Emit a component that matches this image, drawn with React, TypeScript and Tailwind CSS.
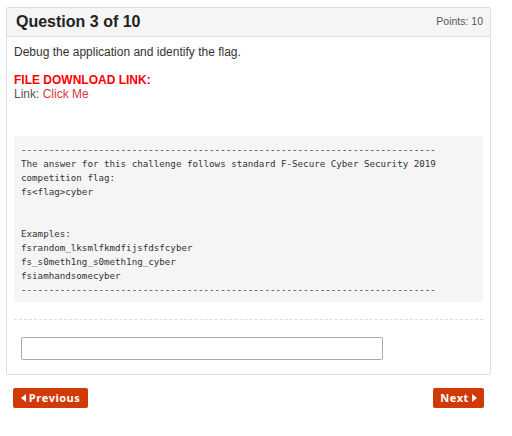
const preText = `---------------------------------------------------------------------------
The answer for this challenge follows standard F-Secure Cyber Security 2019
competition flag:
fs<flag>cyber


Examples:
fsrandom_lksmlfkmdfijsfdsfcyber
fs_s0meth1ng_s0meth1ng_cyber
fsiamhandsomecyber
---------------------------------------------------------------------------`;

const App = () => {
  return (
    <div className="min-h-[436px] w-[512px] bg-white font-['Liberation_Sans',Arial,sans-serif] text-[#333]">
      <div className="ml-[6px] w-[485px] pt-[7px]">
        <div className="rounded-[2px] border border-[#dddddd] bg-white">
          <div className="flex h-[29px] items-center justify-between border-b border-[#dddddd] bg-[#f5f5f5] pl-[9px] pr-[7px]">
            <h1 className="text-[16px] font-bold leading-none text-[#222]">Question 3 of 10</h1>
            <span className="text-[10.5px] text-[#555]">Points: 10</span>
          </div>
          <div className="px-[7px] pt-[8px]">
            <p className="text-[12px] leading-[14px]">Debug the application and identify the flag.</p>
            <p className="mt-[14px] text-[12px] font-bold leading-[14px] text-[#ff0000]">FILE DOWNLOAD LINK:</p>
            <p className="text-[12px] leading-[14px] text-[#555]">
              Link: <span className="text-[#d9363e]">Click Me</span>
            </p>
            <pre className="mt-[35px] w-[469px] rounded-[2px] bg-[#f5f5f5] pb-[5px] pl-[7px] pt-[7px] font-['DejaVu_Sans_Mono',monospace] text-[9.2px] leading-[14px] text-[#333]">
              {preText}
            </pre>
            <div className="mt-[17px] border-t border-dashed border-[#dddddd]" />
            <div className="pb-[14px] pl-[7px] pt-[17px]">
              <input
                type="text"
                className="block h-[23px] w-[362px] rounded-[2px] border border-[#aaaaaa] bg-white px-2 text-[12px] outline-none"
              />
            </div>
          </div>
        </div>
        <div className="mt-[13px] flex items-center justify-between pl-[7px] pr-[7px]">
          <button className="flex h-[20px] w-[75px] items-center justify-center gap-[3px] rounded-[2px] bg-[#d13a06] font-['Open_Sans',sans-serif] text-[11px] font-bold tracking-[0.5px] text-white">
            <svg width="5" height="8" viewBox="0 0 5 8">
              <path d="M5 0 L0 4 L5 8 Z" fill="white" />
            </svg>
            Previous
          </button>
          <button className="flex h-[20px] w-[51px] items-center justify-center gap-[3px] rounded-[2px] bg-[#d13a06] font-['Open_Sans',sans-serif] text-[11px] font-bold tracking-[0.5px] text-white">
            Next
            <svg width="5" height="8" viewBox="0 0 5 8">
              <path d="M0 0 L5 4 L0 8 Z" fill="white" />
            </svg>
          </button>
        </div>
      </div>
    </div>
  );
};

export default App;
